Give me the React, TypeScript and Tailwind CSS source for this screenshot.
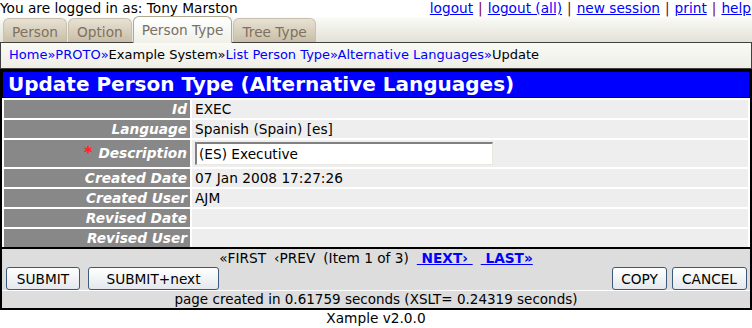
export default function App() {
  const tabs = [
    { name: "Person", active: false },
    { name: "Option", active: false },
    { name: "Person Type", active: true },
    { name: "Tree Type", active: false },
  ];

  const rows: { label: string; value?: string; required?: boolean; input?: boolean }[] = [
    { label: "Id", value: "EXEC" },
    { label: "Language", value: "Spanish (Spain) [es]" },
    { label: "Description", value: "(ES) Executive", required: true, input: true },
    { label: "Created Date", value: "07 Jan 2008 17:27:26" },
    { label: "Created User", value: "AJM" },
    { label: "Revised Date" },
    { label: "Revised User" },
  ];

  const links = ["logout", "logout (all)", "new session", "print", "help"];

  const btn =
    "h-[23px] rounded-[3px] border border-[#3c5a78] bg-gradient-to-b from-[#ffffff] to-[#e4e8ec] text-[13.7px] leading-[16px] text-black";

  return (
    <div className="w-[752px] h-[328px] overflow-hidden bg-white text-[13.7px] leading-[16px] text-black font-['DejaVu_Sans','Verdana',sans-serif]">
      {/* top line */}
      <div className="flex justify-between h-[17px]">
        <span>You are logged in as: Tony Marston</span>
        <span className="flex gap-[5px] pr-[1px]">
          {links.map((l, i) => (
            <span key={l} className="flex gap-[5px]">
              {i > 0 && <span className="text-[#800040]">|</span>}
              <a className="text-[#0000ff] underline">{l}</a>
            </span>
          ))}
        </span>
      </div>

      {/* tabs */}
      <div className="flex items-end h-[25px] pl-[3px] gap-[1px] bg-gradient-to-b from-[#fbfbf7] to-[#e2e2d8]">
        {tabs.map((t) =>
          t.active ? (
            <div
              key={t.name}
              className="h-[27px] -mb-[1px] px-[8px] pt-[5px] rounded-t-[6px] border border-b-0 border-[#b0a890] bg-gradient-to-b from-[#ffffff] to-[#f0f0e8] text-[#7a7064] z-10"
            >
              {t.name}
            </div>
          ) : (
            <div
              key={t.name}
              className="h-[24px] px-[8px] pt-[5px] rounded-t-[6px] border border-b-0 border-[#c8c0ac] bg-gradient-to-b from-[#e8e2d4] to-[#c8bea8] text-[#807060]"
            >
              {t.name}
            </div>
          )
        )}
      </div>

      {/* breadcrumb */}
      <div className="h-[27px] border border-[#404040] bg-gradient-to-b from-[#fafaf6] to-[#eeeee6] pl-[8px] pt-[4px] text-[13px]">
        <a className="text-[#0000ff]">Home»</a>
        <a className="text-[#0000ff]">PROTO»</a>
        <span>Example System»</span>
        <a className="text-[#0000ff]">List Person Type»</a>
        <a className="text-[#0000ff]">Alternative Languages»</a>
        <span>Update</span>
      </div>

      {/* main box */}
      <div className="border-2 border-black">
        <div className="h-[27px] border border-black bg-[#0000ff] text-white font-bold text-[20px] leading-[24px] pl-[5px]">
          Update Person Type (Alternative Languages)
        </div>
        <div className="grid grid-cols-[186px_1fr] gap-[2px] pl-[2px] pr-[2px] pt-[2px]">
          {rows.map((r) => (
            <div key={r.label} className="contents">
              <div
                className={`bg-[#888888] text-white font-bold italic text-right pr-[3px] ${
                  r.input ? "h-[27px] pt-[5px]" : "h-[18px] pt-[1px]"
                }`}
              >
                {r.required && <span className="text-[#ff2020] not-italic text-[16px] mr-[6px]">*</span>}
                {r.label}
              </div>
              <div className={`bg-[#eeeeee] pl-[3px] ${r.input ? "h-[27px] pt-[2px]" : "h-[18px] pt-[1px]"}`}>
                {r.input ? (
                  <div className="w-[298px] h-[23px] bg-white border border-t-[2px] border-l-[2px] border-t-[#808080] border-l-[#808080] border-r-[#e8e8e0] border-b-[#e8e8e0] pl-[2px] pt-[2px]">
                    {r.value}
                  </div>
                ) : (
                  r.value
                )}
              </div>
            </div>
          ))}
        </div>

        <div className="border-t-2 border-black bg-[#dddddd]">
          <div className="h-[18px] flex justify-center gap-[8px] pt-[1px]">
            <span>«FIRST</span>
            <span>‹PREV</span>
            <span>(Item 1 of 3)</span>
            <a className="text-[#0000ff] font-bold underline">&nbsp;NEXT›&nbsp;</a>
            <a className="text-[#0000ff] font-bold underline">&nbsp;LAST»</a>
          </div>
          <div className="h-[24px] flex items-center justify-between pl-[4px] pr-[3px] border-b border-white">
            <div className="flex gap-[8px]">
              <button className={`${btn} w-[74px]`}>SUBMIT</button>
              <button className={`${btn} w-[131px]`}>SUBMIT+next</button>
            </div>
            <div className="flex gap-[5px]">
              <button className={`${btn} w-[55px]`}>COPY</button>
              <button className={`${btn} w-[75px]`}>CANCEL</button>
            </div>
          </div>
          <div className="h-[17px] text-center text-[13.5px]">
            page created in 0.61759 seconds (XSLT= 0.24319 seconds)
          </div>
        </div>
      </div>
      <div className="text-center pt-[1px] leading-[15px]">Xample v2.0.0</div>
    </div>
  );
}
